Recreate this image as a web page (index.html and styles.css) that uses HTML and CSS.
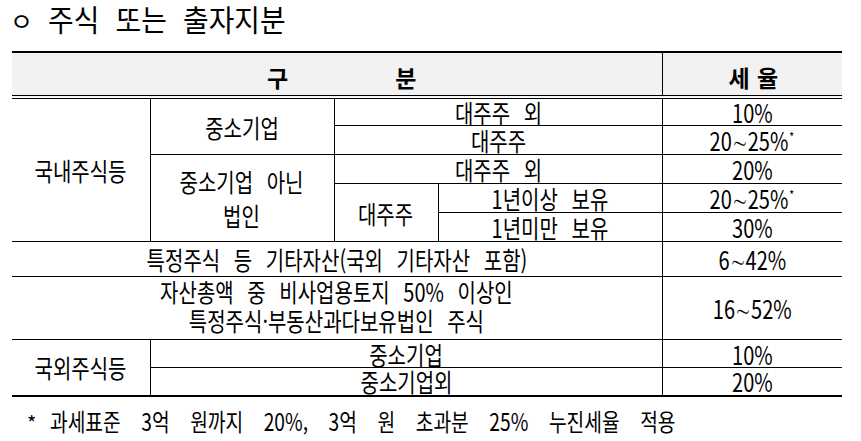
FILE: index.html
```html
<!DOCTYPE html>
<html lang="ko">
<head>
<meta charset="utf-8">
<title>주식 또는 출자지분</title>
<link rel="stylesheet" href="styles.css">
</head>
<body>
<div class="page">
  <h1 class="title"><span class="bullet">ㅇ</span><span class="tt">주식 또는 출자지분</span></h1>
  <table class="tax">
    <colgroup>
      <col class="c1"><col class="c2"><col class="c3"><col class="c4"><col class="c5">
    </colgroup>
    <thead>
      <tr class="hd">
        <th colspan="4"><span class="split"><span>구</span><span>분</span></span></th>
        <th><span class="rate-hd">세 율</span></th>
      </tr>
    </thead>
    <tbody>
      <tr class="r28">
        <td rowspan="5"><span class="s">국내주식등</span></td>
        <td rowspan="2"><span class="s">중소기업</span></td>
        <td colspan="2"><span class="s">대주주 외</span></td>
        <td><span class="s">10%</span></td>
      </tr>
      <tr class="r29">
        <td colspan="2"><span class="s">대주주</span></td>
        <td><span class="s">20∼25%<sup class="ast">*</sup></span></td>
      </tr>
      <tr class="r29">
        <td rowspan="3"><span class="s ml">중소기업 아닌<br>법인</span></td>
        <td colspan="2"><span class="s">대주주 외</span></td>
        <td><span class="s">20%</span></td>
      </tr>
      <tr class="r29">
        <td rowspan="2"><span class="s">대주주</span></td>
        <td><span class="s">1년이상 보유</span></td>
        <td><span class="s">20∼25%<sup class="ast">*</sup></span></td>
      </tr>
      <tr class="r29">
        <td><span class="s">1년미만 보유</span></td>
        <td><span class="s">30%</span></td>
      </tr>
      <tr class="r35">
        <td colspan="4"><span class="s">특정주식 등 기타자산(국외 기타자산 포함)</span></td>
        <td><span class="s">6∼42%</span></td>
      </tr>
      <tr class="r60">
        <td colspan="4" class="up"><span class="s ml2">자산총액 중 비사업용토지 50% 이상인<br>특정주식·부동산과다보유법인 주식</span></td>
        <td><span class="s">16∼52%</span></td>
      </tr>
      <tr class="r28">
        <td rowspan="2"><span class="s">국외주식등</span></td>
        <td colspan="3"><span class="s">중소기업</span></td>
        <td><span class="s">10%</span></td>
      </tr>
      <tr class="r28">
        <td colspan="3"><span class="s">중소기업외</span></td>
        <td><span class="s">20%</span></td>
      </tr>
    </tbody>
  </table>
  <p class="note"><span class="star">*</span><span class="ns">과세표준 3억 원까지 20%, 3억 원 초과분 25% 누진세율 적용</span></p>
</div>
</body>
</html>
```

FILE: styles.css
```css
* { box-sizing: border-box; }
html, body { margin: 0; padding: 0; background: #fff; }
body {
  font-family: "Noto Sans CJK KR", "Noto Sans", sans-serif;
  color: #000;
}
.page {
  width: 861px;
  height: 441px;
  padding: 0 19px 0 12px;
  overflow: hidden;
}
.title {
  margin: 0 0 15px 0;
  font-weight: normal;
  font-size: 30px;
  line-height: 36px;
  height: 36px;
  white-space: nowrap;
  display: flex;
  align-items: baseline;
}
.bullet {
  display: inline-block;
  font-size: 25px;
  width: 38px;
  margin-left: -2px;
}
.tt {
  display: inline-block;
  transform: scaleX(0.93);
  transform-origin: left center;
  word-spacing: 9px;
}

.tax {
  width: 830px;
  border-collapse: collapse;
  table-layout: fixed;
  border-top: 2px solid #000;
  border-bottom: 2px solid #000;
}
.c1 { width: 138px; }
.c2 { width: 184px; }
.c3 { width: 104px; }
.c4 { width: 224px; }
.c5 { width: 180px; }

.tax th {
  background: #f2f2f2;
  height: 45px;
  padding: 6px 0 0 0;
  border-bottom: 4px double #000;
  border-right: 1px solid #000;
  font-size: 23px;
  font-weight: bold;
  line-height: 26px;
  text-align: center;
  vertical-align: middle;
}
.tax th:last-child { border-right: 0; }
.split { display: inline-flex; gap: 107px; padding-left: 10px; }
.rate-hd { word-spacing: 1px; padding-left: 2px; }

.tax td {
  border: 1px solid #000;
  padding: 0;
  font-size: 25px;
  line-height: 26px;
  text-align: center;
  vertical-align: middle;
  white-space: nowrap;
}
.tax tr > td:first-child { border-left: 0; }
.tax tr > td:last-child { border-right: 0; }
.tax td.up { padding-bottom: 4px; }

.r28 { height: 28px; }
.r29 { height: 29px; }
.r35 { height: 35px; }
.r60 { height: 60px; }

.s {
  display: inline-block;
  transform: scaleX(0.8);
  word-spacing: 10px;
}
.ml { line-height: 34px; }
.ml2 { line-height: 29px; }
.ast {
  font-size: 13px;
  line-height: 0;
  vertical-align: 9px;
  margin-left: 1px;
}

.note {
  margin: 9px 0 0 15px;
  font-size: 24px;
  line-height: 30px;
  white-space: nowrap;
  display: flex;
  align-items: baseline;
}
.star {
  display: inline-block;
  width: 23px;
  font-size: 20px;
}
.ns {
  display: inline-block;
  transform: scaleX(0.8);
  transform-origin: left center;
  word-spacing: 19px;
}
```
